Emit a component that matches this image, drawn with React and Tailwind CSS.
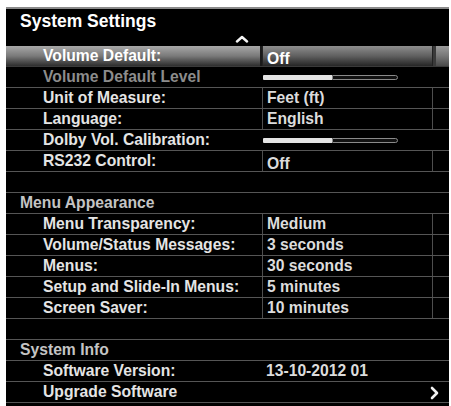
import React from "react";

const rows = [
  { kind: "item", label: "Volume Default:", value: "Off", box: true, highlight: true, low: true },
  { kind: "item", label: "Volume Default Level", slider: true, disabled: true },
  { kind: "item", label: "Unit of Measure:", value: "Feet (ft)", box: true },
  { kind: "item", label: "Language:", value: "English", box: true },
  { kind: "item", label: "Dolby Vol. Calibration:", slider: true },
  { kind: "item", label: "RS232 Control:", value: "Off", box: true, low: true },
  { kind: "empty" },
  { kind: "section", label: "Menu Appearance" },
  { kind: "item", label: "Menu Transparency:", value: "Medium", box: true },
  { kind: "item", label: "Volume/Status Messages:", value: "3 seconds", box: true },
  { kind: "item", label: "Menus:", value: "30 seconds", box: true },
  { kind: "item", label: "Setup and Slide-In Menus:", value: "5 minutes", box: true },
  { kind: "item", label: "Screen Saver:", value: "10 minutes", box: true },
  { kind: "empty" },
  { kind: "section", label: "System Info" },
  { kind: "item", label: "Software Version:", value: "13-10-2012 01" },
  { kind: "item", label: "Upgrade Software", arrow: true },
];

function Slider() {
  return (
    <div className="flex h-[5px] w-[135px] items-stretch -ml-[3px]">
      <div className="w-[69px] bg-[#e4e4e4] rounded-l-[1px]" />
      <div className="flex-1 border border-[#8a8a8a] rounded-r-[3px] bg-[#111]" />
    </div>
  );
}

function Row({ r }) {
  if (r.kind === "empty") {
    return <div className="h-[21px] border-b-[1.5px] border-[#555]" />;
  }
  if (r.kind === "section") {
    return (
      <div className="flex h-[21px] items-center border-b-[1.5px] border-[#555] pl-[14px] text-[15.7px] font-bold leading-none text-[#c4c4c4]">
        {r.label}
      </div>
    );
  }
  const hl = r.highlight;
  return (
    <div className={"flex h-[21px] border-b-[1.5px] " + (hl ? "border-[#3a3a3a]" : "border-[#555]")}>
      <div
        className={
          "flex w-[254px] items-center pl-[37px] text-[15.7px] font-bold leading-none " +
          (r.disabled ? "text-[#8c8c8c] " : hl ? "text-white " : "text-[#e4e4e4] ") +
          (hl ? "bg-gradient-to-b from-[#a8a8a8] via-[#7a7a7a] to-[#2e2e2e]" : "")
        }
      >
        {r.label}
      </div>
      <div className={"w-[2px] " + (hl ? "bg-[#1a1a1a]" : "")} />
      <div
        className={
          "flex w-[171px] items-center pl-[4px] text-[15.7px] font-bold leading-none " +
          (r.box ? "border-l border-r " : "") +
          (hl
            ? "bg-gradient-to-b from-[#8e8e8e] via-[#606060] to-[#262626] text-white border-[#222] "
            : "text-[#dcdcdc] border-[#4e4e4e] ")
        }
      >
        {r.slider ? <Slider /> : <span className={r.low ? "pt-[5px]" : ""}>{r.value}</span>}
      </div>
      <div
        className={
          "flex flex-1 items-center " +
          (hl ? "bg-gradient-to-b from-[#9c9c9c] via-[#777] to-[#4a4a4a] border-l-[3px] border-[#3a3a3a]" : "")
        }
      >
        {r.arrow && (
          <svg width="10" height="14" viewBox="0 0 10 14" className="-ml-[4px] mt-[2px]">
            <path d="M3 2 L8 7 L3 12" fill="none" stroke="#f2f2f2" strokeWidth="2.6" strokeLinecap="round" strokeLinejoin="round" />
          </svg>
        )}
      </div>
    </div>
  );
}

export default function App() {
  return (
    <div
      className="h-[406px] w-[451px] bg-white pl-[6px] pr-[2px] pt-[7px]"
      style={{ fontFamily: '"Liberation Sans", Arial, sans-serif' }}
    >
      <div className="h-full w-full overflow-hidden bg-black">
        <div className="h-[39px] border-t-2 border-[#8a8a8a]">
          <div className="pl-[14px] pt-[2px] text-[17.5px] font-bold leading-[20px] text-white">System Settings</div>
          <div className="flex pl-[229px] pt-[4px]">
            <svg width="14" height="8" viewBox="0 0 14 8">
              <path d="M2 6.5 L7 2 L12 6.5" fill="none" stroke="#f4f4f4" strokeWidth="2.4" strokeLinecap="round" strokeLinejoin="round" />
            </svg>
          </div>
        </div>
        {rows.map((r, i) => (
          <Row key={i} r={r} />
        ))}
      </div>
    </div>
  );
}
